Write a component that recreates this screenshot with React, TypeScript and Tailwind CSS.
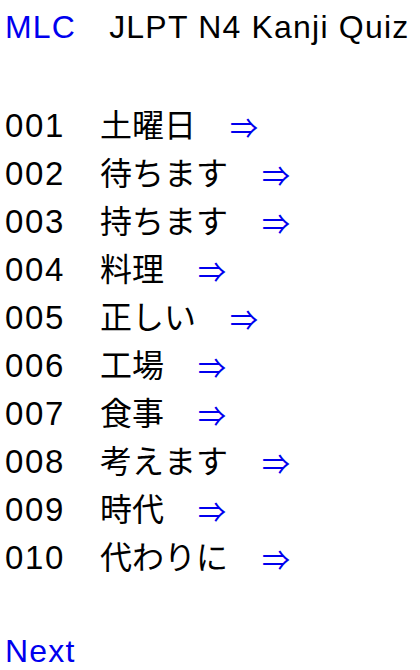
const items = [
  { no: "001", word: "土曜日" },
  { no: "002", word: "待ちます" },
  { no: "003", word: "持ちます" },
  { no: "004", word: "料理" },
  { no: "005", word: "正しい" },
  { no: "006", word: "工場" },
  { no: "007", word: "食事" },
  { no: "008", word: "考えます" },
  { no: "009", word: "時代" },
  { no: "010", word: "代わりに" },
];

export default function App() {
  return (
    <div className="min-h-screen bg-white pl-[5px] pt-[3px] text-[32px] leading-[48px] text-black font-['Liberation_Sans','Noto_Sans_CJK_JP',sans-serif]">
      {/* Header */}
      <div className="h-[48px] whitespace-nowrap tracking-[1.2px]">
        <a href="#" className="text-[#0000ee]">MLC</a>
        <span className="ml-[33px]">JLPT N4 Kanji Quiz</span>
      </div>

      <div className="h-[48px]" />

      {/* Kanji list */}
      {items.map((it) => (
        <div key={it.no} className="h-[48px] whitespace-nowrap">
          <span className="inline-block w-[95px] text-[33px] tracking-[1.6px]">{it.no}</span>
          <span className="font-['Noto_Sans_CJK_JP',sans-serif]">{it.word}</span>
          <a href="#" className="ml-[34px] align-[-2px] text-[28px] text-[#0000ee] font-['Noto_Sans_CJK_JP',sans-serif]">⇒</a>
        </div>
      ))}

      <div className="h-[48px]" />

      <a href="#" className="tracking-[1.2px] text-[#0000ee]">Next</a>
    </div>
  );
}
